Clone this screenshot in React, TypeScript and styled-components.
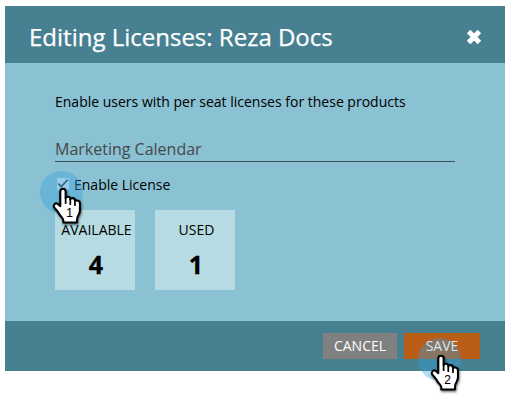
import React from 'react';
import styled, { createGlobalStyle } from 'styled-components';

const GlobalStyle = createGlobalStyle`
  * { box-sizing: border-box; }
  body { margin: 0; background: #fff; font-family: "Open Sans", sans-serif; overflow: hidden; }
`;

const Page = styled.main`
  height: 402px;
  padding: 6px 7px 0 5px;
`;

const Dialog = styled.section`
  display: flex;
  flex-direction: column;
  width: 500px;
  height: 365px;
  background: #8ac1d3;
`;

const Header = styled.header`
  display: flex;
  align-items: center;
  justify-content: space-between;
  height: 57px;
  padding: 4px 23px 0 24px;
  background: #478091;
`;

const Title = styled.h1`
  margin: 0;
  color: #fff;
  font-size: 24px;
  font-weight: 400;
  line-height: 32px;
  white-space: nowrap;
  -webkit-text-stroke: 0.25px #fff;
`;

const CloseButton = styled.button`
  display: flex;
  padding: 0;
  border: 0;
  background: none;
`;

const Body = styled.div`
  flex: 1;
  padding: 29px 50px 0;
`;

const Intro = styled.p`
  margin: 0;
  color: #000;
  font-size: 14px;
  line-height: 20px;
  white-space: nowrap;
`;

const Product = styled.h2`
  height: 25px;
  margin: 25px 0 0;
  border-bottom: 1px solid #3f4f57;
  color: #484848;
  font-size: 16px;
  font-weight: 400;
  line-height: 24px;
`;

const LicenseOption = styled.div`
  display: flex;
  align-items: center;
  gap: 5px;
  height: 20px;
  margin-top: 12px;
  padding-left: 2px;
  font-size: 14px;
  white-space: nowrap;
`;

const Checkbox = styled.span`
  position: relative;
  display: flex;
  width: 12px;
  height: 12px;
  background: #d2e4f0;
`;

const Cards = styled.div`
  display: flex;
  gap: 20px;
  margin-top: 16px;
`;

const Card = styled.div`
  display: flex;
  flex-direction: column;
  align-items: center;
  width: 80px;
  height: 80px;
  padding-top: 10px;
  background: #b6dbe3;
  color: #000;
`;

const CardLabel = styled.span`
  padding-left: 3px;
  font-size: 14px;
  line-height: 20px;
`;

const CardValue = styled.strong`
  padding-left: 2px;
  margin-top: 6px;
  font-size: 25px;
  font-weight: 700;
  line-height: 36px;
  -webkit-text-stroke: 0.3px #000;
`;

const Footer = styled.footer`
  display: flex;
  justify-content: flex-end;
  gap: 7px;
  height: 50px;
  padding: 12px 25px 0 0;
  background: #478091;
`;

const Button = styled.button<{ $primary?: boolean }>`
  position: relative;
  width: ${({ $primary }) => ($primary ? 76 : 74)}px;
  height: 26px;
  padding: 0;
  border: 0;
  background: ${({ $primary }) => ($primary ? '#ba5d17' : '#808080')};
  color: ${({ $primary }) => ($primary ? '#d0e8fb' : '#fff')};
  font: 400 14px/26px "Open Sans", sans-serif;
`;

const ButtonLabel = styled.span`
  position: relative;
  z-index: 2;
`;

const Marker = styled.svg<{ $x: number; $y: number }>`
  position: absolute;
  z-index: 1;
  left: ${({ $x }) => $x}px;
  top: ${({ $y }) => $y}px;
  overflow: visible;
  pointer-events: none;
`;

const HandShape = styled.path`
  fill: #fff;
  stroke: #000;
  stroke-width: 6.2;
  stroke-linejoin: round;
  filter: drop-shadow(2px 4px 3px rgba(0, 0, 0, 0.6));
`;

const StepNumber = styled.text`
  font: 36px "Liberation Sans", sans-serif;
  text-anchor: middle;
  stroke: #000;
  stroke-width: 0.3;
`;

const HAND =
  'M99 100V56Q99 48 107 48Q115 48 115 56V76Q116 72 122 72Q129 72 129 79Q130 76 136 76Q143 76 143 84Q144 82 150 83Q158 84 158 92V111Q158 120 154 126Q149 134 149 142V149H108V142Q107 137 103 133Q97 127 93 119L80 103Q78 98 82 94Q86 90 91 93Z';

function StepMarker({ step, x, y }: { step: number; x: number; y: number }) {
  return (
    <Marker $x={x} $y={y} width={43} height={56} viewBox="0 0 43 56">
      <circle cx="21.5" cy="21.5" r="21.5" fill="#32a0e1" fillOpacity=".37" />
      <g transform="translate(-12.7 1.8) scale(.33333)">
        <HandShape d={HAND} />
        <path d="M115 75V91M129 79V94M143 84V97" stroke="#000" strokeWidth="5.2" strokeLinecap="round" />
        <StepNumber x="127" y="132">{step}</StepNumber>
      </g>
    </Marker>
  );
}

export default function App() {
  return (
    <>
      <GlobalStyle />
      <Page>
        <Dialog role="dialog" aria-label="Editing Licenses">
          <Header>
            <Title>Editing Licenses: Reza Docs</Title>
            <CloseButton aria-label="Close">
              <svg width="16" height="16" viewBox="0 0 16 16">
                <path d="M2.6 2.6L13.4 13.4M13.4 2.6L2.6 13.4" stroke="#fff" strokeWidth="5" />
              </svg>
            </CloseButton>
          </Header>
          <Body>
            <Intro>Enable users with per seat licenses for these products</Intro>
            <Product>Marketing Calendar</Product>
            <LicenseOption>
              <Checkbox role="checkbox" aria-checked="true" aria-label="Enable License">
                <svg width="14" height="12" viewBox="0 0 14 12">
                  <path d="M1.5 5.5L5 9L12.5 1" fill="none" stroke="#2f3f48" strokeWidth="2" />
                </svg>
                <StepMarker step={1} x={-17} y={-7} />
              </Checkbox>
              <span>Enable License</span>
            </LicenseOption>
            <Cards>
              <Card>
                <CardLabel>AVAILABLE</CardLabel>
                <CardValue>4</CardValue>
              </Card>
              <Card>
                <CardLabel>USED</CardLabel>
                <CardValue>1</CardValue>
              </Card>
            </Cards>
          </Body>
          <Footer>
            <Button>CANCEL</Button>
            <Button $primary>
              <ButtonLabel>SAVE</ButtonLabel>
              <StepMarker step={2} x={14} y={5} />
            </Button>
          </Footer>
        </Dialog>
      </Page>
    </>
  );
}
